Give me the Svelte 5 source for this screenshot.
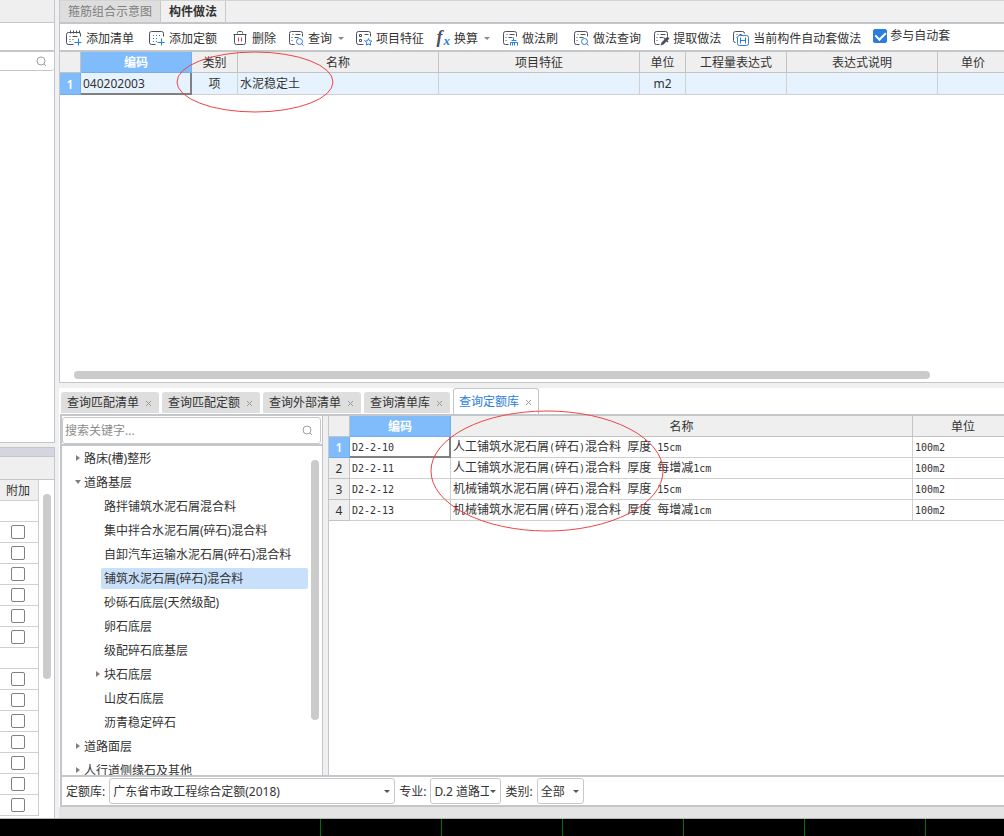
<script>
  let keyword = "";
  let autoApply = true;
  let library = "广东省市政工程综合定额(2018)";
  let major = "D.2 道路工程";
  let kind = "全部";

  const tools = [
    { icon: "addList", label: "添加清单", spaced: true },
    { icon: "addQuota", label: "添加定额", spaced: true },
    { icon: "trash", label: "删除" },
    { icon: "query", label: "查询", menu: true },
    { icon: "feature", label: "项目特征" },
    { icon: "fx", label: "换算", menu: true },
    { icon: "brush", label: "做法刷", spaced: true },
    { icon: "query", label: "做法查询" },
    { icon: "extract", label: "提取做法" },
    { icon: "auto", label: "当前构件自动套做法" },
  ];

  const queryTabs = ["查询匹配清单", "查询匹配定额", "查询外部清单", "查询清单库", "查询定额库"];
  let activeTab = "查询定额库";

  const tree = [
    { label: "路床(槽)整形", level: 0, arrow: "closed" },
    { label: "道路基层", level: 0, arrow: "open" },
    { label: "路拌铺筑水泥石屑混合料", level: 1 },
    { label: "集中拌合水泥石屑(碎石)混合料", level: 1 },
    { label: "自卸汽车运输水泥石屑(碎石)混合料", level: 1 },
    { label: "铺筑水泥石屑(碎石)混合料", level: 1 },
    { label: "砂砾石底层(天然级配)", level: 1 },
    { label: "卵石底层", level: 1 },
    { label: "级配碎石底基层", level: 1 },
    { label: "块石底层", level: 1, arrow: "closed" },
    { label: "山皮石底层", level: 1 },
    { label: "沥青稳定碎石", level: 1 },
    { label: "道路面层", level: 0, arrow: "closed" },
    { label: "人行道侧缘石及其他", level: 0, arrow: "closed" },
  ];
  let selectedNode = "铺筑水泥石屑(碎石)混合料";

  const quotas = [
    { code: "D2-2-10", name: "人工铺筑水泥石屑(碎石)混合料 厚度 15cm", unit: "100m2" },
    { code: "D2-2-11", name: "人工铺筑水泥石屑(碎石)混合料 厚度 每增减1cm", unit: "100m2" },
    { code: "D2-2-12", name: "机械铺筑水泥石屑(碎石)混合料 厚度 15cm", unit: "100m2" },
    { code: "D2-2-13", name: "机械铺筑水泥石屑(碎石)混合料 厚度 每增减1cm", unit: "100m2" },
  ];

  // rows of the attribute table, false = no checkbox in the row
  const extras = [false, true, true, true, true, true, true, false, true, true, true, true, true, true, true];

  // split into half-width and full-width runs
  const runs = (text) => text.match(/[\x20-\x7e]+|[^\x20-\x7e]+/g) || [];
  const isLatin = (run) => run.charCodeAt(0) < 127;
</script>

{#snippet frame()}
  <path d="M14 6V3a2 2 0 0 0-2-2H3a2 2 0 0 0-2 2v9a2 2 0 0 0 2 2h3" />
  <path d="M4 4h1M7 4h5M3 7h1M6 7h4M3 10h1" />
{/snippet}

{#snippet magnifier()}
  <svg class="magnifier" viewBox="0 0 11 11" width="11" height="11" aria-hidden="true">
    <circle cx="5" cy="5" r="4" />
    <path d="M8 8l2 2" />
  </svg>
{/snippet}

{#snippet cells(text)}{#each runs(text) as run}<span class:latin={isLatin(run)}>{run}</span>{/each}{/snippet}

{#snippet toolIcon(name)}
  <svg class="icon" class:narrow={name === "fx"} viewBox="-.5 -.5 16 16" width="16" height="16" aria-hidden="true">
    {#if name === "addList"}
      <path d="M2 2a2 2 0 0 0-2 2v8a2 2 0 0 0 2 2h5M13 2a1 1 0 0 1 1 1v3M2 2h11M4 0v3M7 0v3M10 0v3M13 0v3" />
      <path d="M3 6h1M6 6h5M3 9h1M6 9h1M3 11h1" />
      <path class="blue" d="M12 8v7M8 12h7" />
    {:else if name === "addQuota"}
      <path d="M14 6V3a2 2 0 0 0-2-2H2a2 2 0 0 0-2 2v9a2 2 0 0 0 2 2h4" />
      <path class="blue" stroke-dasharray="1 2" d="M3.500 5h8M3.500 8h5M3.500 11h4" />
      <path class="blue" d="M12 8v7M8 12h7" />
    {:else if name === "trash"}
      <path d="M1 4h13M5 3V2a1 1 0 0 1 1-1h3a1 1 0 0 1 1 1v1M2 4v8a2 2 0 0 0 2 2h7a2 2 0 0 0 2-2V4" />
      <path class="red" d="M6 7v4M9 7v4" />
    {:else if name === "query"}
      {@render frame()}
      <circle class="blue" cx="11" cy="11" r="3" />
      <path class="blue" d="M13 13l2 2" />
    {:else if name === "feature"}
      <path d="M14 6V3a2 2 0 0 0-2-2H2a2 2 0 0 0-2 2v9a2 2 0 0 0 2 2h5" />
      <path d="M3 4h2v2H3zM3 9h2v2H3zM8 4h4M8 10h0.500" />
      <path class="blue" d="M12 8l1 2.300 2.400.3-1.700 1.600.4 2.400-2.100-1.100-2.100 1.100.4-2.400-1.700-1.600 2.400-.3z" />
    {:else if name === "fx"}
      <text x="0" y="12">f</text>
      <text class="sub" x="7" y="14">x</text>
    {:else if name === "brush"}
      {@render frame()}
      <path class="blue" d="M11 7v3M9 10h5M8 12h7M8 12v3M10 12v3M12 12v3M15 12v3" />
    {:else if name === "extract"}
      {@render frame()}
      <path class="fill" d="M7 15l1-3 3-3-1-1 1-1 1 1 2-2 2 2-2 2 1 1-1 1-1-1-3 3z" />
    {:else if name === "auto"}
      <path d="M11 3a2 2 0 0 0-2-2H2a2 2 0 0 0-2 2v7a2 2 0 0 0 2 2M3 4h1M6 4h2M3 7h0.500" />
      <rect class="blue white" x="4" y="5" width="11" height="10" rx="2" />
      <path class="blue" d="M7 7v6M12 7v6M7 10h5" />
    {/if}
  </svg>
{/snippet}

<div class="app">
  <div class="workspace">
    <aside class="side">
      <div class="side-top">
        <div class="side-title"></div>
        <div class="side-tools"></div>
        <div class="side-search">{@render magnifier()}</div>
      </div>
      <div class="side-bottom">
        <div class="side-bar"></div>
        <div class="side-title"></div>
        <div class="side-grid">
          <table class="extra">
            <thead>
              <tr><th>附加</th></tr>
            </thead>
            <tbody>
              {#each extras as extra, i}
                <tr>
                  <td>
                    {#if extra}
                      <input type="checkbox" aria-label="附加 {i + 1}" />
                    {/if}
                  </td>
                </tr>
              {/each}
            </tbody>
          </table>
          <div class="vbar side-thumb"></div>
        </div>
      </div>
    </aside>

    <main class="main">
      <section class="method">
        <nav class="top-tabs">
          <button>箍筋组合示意图</button>
          <button class="active">构件做法</button>
        </nav>

        <div class="toolbar">
          {#each tools as tool}
            <button class="tool" class:spaced={tool.spaced}>
              {@render toolIcon(tool.icon)}
              <span>{tool.label}</span>
              {#if tool.menu}
                <i class="caret"></i>
              {/if}
            </button>
          {/each}
          <label class="auto">
            <input type="checkbox" bind:checked={autoApply} />
            参与自动套
          </label>
        </div>

        <div class="grid-wrap">
          <table class="grid items">
            <colgroup>
              <col style="width: 21px" />
              <col style="width: 111px" />
              <col style="width: 46px" />
              <col style="width: 201px" />
              <col style="width: 201px" />
              <col style="width: 46px" />
              <col style="width: 101px" />
              <col style="width: 151px" />
              <col />
            </colgroup>
            <thead>
              <tr>
                <th></th>
                <th class="picked">编码</th>
                <th>类别</th>
                <th>名称</th>
                <th>项目特征</th>
                <th>单位</th>
                <th>工程量表达式</th>
                <th>表达式说明</th>
                <th>单价</th>
              </tr>
            </thead>
            <tbody>
              <tr>
                <th class="picked">1</th>
                <td class="current">040202003</td>
                <td class="center">项</td>
                <td>水泥稳定土</td>
                <td></td>
                <td class="center">m2</td>
                <td></td>
                <td></td>
                <td></td>
              </tr>
            </tbody>
          </table>
        </div>
        <div class="hbar"></div>

        <svg class="mark mark-item" viewBox="0 0 158 62" aria-hidden="true">
          <ellipse cx="79" cy="31" rx="78" ry="30" />
        </svg>
      </section>

      <section class="dock">
        <nav class="query-tabs">
          {#each queryTabs as tab}
            <button class:active={tab === activeTab} on:click={() => (activeTab = tab)}>
              <span>{tab}</span>
              <svg viewBox="0 0 8 8" width="8" height="8" aria-hidden="true"><path d="M1 2l5 5M6 2l-5 5" /></svg>
            </button>
          {/each}
        </nav>

        <div class="dock-body">
          <div class="panes">
            <div class="catalog">
              <div class="search">
                <input type="text" placeholder="搜索关键字..." aria-label="搜索关键字" bind:value={keyword} />
                {@render magnifier()}
              </div>
              <div class="tree-wrap">
                <ul class="tree">
                  {#each tree as node}
                    <li class:child={node.level === 1}>
                      <i class="arrow {node.arrow || ''}"></i>
                      <button class:selected={node.label === selectedNode} on:click={() => (selectedNode = node.label)}>
                        {node.label}
                      </button>
                    </li>
                  {/each}
                </ul>
                <div class="vbar tree-thumb"></div>
              </div>
            </div>
            <div class="splitter"></div>
            <div class="grid-wrap">
              <table class="grid quotas">
                <colgroup>
                  <col style="width: 21px" />
                  <col style="width: 101px" />
                  <col />
                  <col style="width: 101px" />
                </colgroup>
                <thead>
                  <tr>
                    <th></th>
                    <th class="picked">编码</th>
                    <th>名称</th>
                    <th>单位</th>
                  </tr>
                </thead>
                <tbody>
                  {#each quotas as quota, i}
                    <tr>
                      <th class:picked={i === 0}>{i + 1}</th>
                      <td class:current={i === 0}>{@render cells(quota.code)}</td>
                      <td>{@render cells(quota.name)}</td>
                      <td>{@render cells(quota.unit)}</td>
                    </tr>
                  {/each}
                </tbody>
              </table>
            </div>
          </div>

          <div class="filters">
            <label for="library">定额库:</label>
            <div class="select library">
              <select id="library" bind:value={library}>
                <option>广东省市政工程综合定额(2018)</option>
              </select>
            </div>
            <label for="major">专业:</label>
            <div class="select major">
              <select id="major" bind:value={major}>
                <option>D.2 道路工程</option>
              </select>
            </div>
            <label for="kind">类别:</label>
            <div class="select kind">
              <select id="kind" bind:value={kind}>
                <option>全部</option>
              </select>
            </div>
          </div>
        </div>
        <div class="strip"></div>

        <svg class="mark mark-quota" viewBox="0 0 234 122" aria-hidden="true">
          <ellipse cx="117" cy="61" rx="116" ry="60" />
        </svg>
      </section>
    </main>
  </div>

  <div class="viewport">
    <div class="axes"></div>
  </div>
</div>

<style>
  :global(body) {
    margin: 0;
    background: #f0f0f0;
  }

  .app {
    min-height: 100vh;
    display: flex;
    flex-direction: column;
    overflow: hidden;
    font-family: "Noto Sans", "Noto Sans CJK SC", sans-serif;
    font-size: 12px;
    line-height: 16px;
    color: #333;
  }

  .app * {
    box-sizing: border-box;
  }

  button,
  input,
  select {
    font: inherit;
    color: inherit;
    margin: 0;
    padding: 0;
    border: none;
    background: none;
  }

  .workspace {
    flex: 1;
    display: flex;
    gap: 4px;
    border-bottom: 1px solid #b4b6b8;
  }

  /* left column */
  .side {
    width: 55px;
    flex-shrink: 0;
    display: flex;
    flex-direction: column;
    gap: 4px;
  }

  .side-top,
  .side-bottom {
    border-right: 1px solid #c3c7cc;
    background: #fff;
  }

  .side-top {
    flex: 1;
    border-bottom: 1px solid #c3c7cc;
  }

  .side-title {
    height: 23px;
    background: #efefef;
    border-bottom: 1px solid #c3c7cc;
  }

  .side-tools {
    height: 29px;
    border-bottom: 2px solid #c3c7cc;
  }

  .side-search {
    height: 19px;
    display: flex;
    align-items: center;
    justify-content: flex-end;
    padding-right: 7px;
    border-bottom: 1px solid #c3c7cc;
    border-radius: 0 3px 3px 0;
  }

  .magnifier {
    fill: none;
    stroke: #a0a0a0;
    flex-shrink: 0;
  }

  .side-bar {
    height: 10px;
    background: #d3d6dd;
    border-top: 1px solid #c3c7cc;
    border-bottom: 1px solid #c3c7cc;
  }

  .side-grid {
    display: flex;
    align-items: flex-start;
    gap: 4px;
    padding-bottom: 2px;
  }

  .extra {
    width: 39px;
    border-spacing: 0;
  }

  .extra th,
  .extra td {
    height: 21px;
    padding: 0;
    border-right: 1px solid #d0d0d0;
    border-bottom: 1px solid #d0d0d0;
    font-weight: 400;
    text-align: center;
  }

  .extra th {
    padding: 2px 2px 0 0;
    background: #efefef;
  }

  .extra input {
    appearance: none;
    display: block;
    width: 14px;
    height: 14px;
    margin-left: 11px;
    border: 1px solid #808080;
    border-radius: 2px;
    background: #fff;
  }

  .vbar {
    width: 8px;
    border-radius: 4px;
    background: #cbcbcb;
    flex-shrink: 0;
  }

  .side-thumb {
    height: 185px;
    margin-top: 14px;
  }

  /* right column */
  .main {
    flex: 1;
    min-width: 0;
    display: flex;
    flex-direction: column;
    gap: 5px;
  }

  .method {
    flex: 1;
    position: relative;
    display: flex;
    flex-direction: column;
    background: #fff;
    border-left: 1px solid #c3c7cc;
    border-bottom: 1px solid #c3c7cc;
  }

  .top-tabs {
    display: flex;
    height: 24px;
    background: #f0f0f0;
    border-top: 1px solid #d4d4d4;
    border-bottom: 2px solid #c3c7cc;
  }

  .top-tabs button {
    padding: 1px 8px 0;
    border-right: 1px solid #c8c8c8;
    background: #dedede;
    color: #808080;
  }

  .top-tabs .active {
    background: #f0f0f0;
    color: #333;
    font-weight: 600;
  }

  .toolbar {
    display: flex;
    align-items: center;
    gap: 12px;
    height: 28px;
    padding: 2px 0 0 6px;
    border-bottom: 2px solid #c3c7cc;
    white-space: nowrap;
  }

  .tool {
    display: flex;
    align-items: center;
    gap: 4px;
  }

  .tool.spaced {
    margin-right: 3px;
  }

  .tool span {
    padding-top: 2px;
  }

  .icon {
    fill: none;
    stroke: #4a4f63;
    flex-shrink: 0;
    overflow: visible;
  }

  .icon.narrow {
    margin-right: -2px;
  }

  .icon .blue {
    stroke: #2b7de0;
  }

  .icon .red {
    stroke: #d8303c;
  }

  .icon .white {
    fill: #fff;
  }

  .icon .fill {
    fill: #4a4f63;
    stroke: none;
  }

  .icon text {
    fill: #4a4f63;
    stroke: none;
    font: italic bold 18px "Liberation Serif", serif;
  }

  .icon .sub {
    fill: #2b7de0;
    font-size: 13px;
  }

  .caret {
    margin: 1px 0 0 2px;
    border: 3px solid transparent;
    border-top-color: #8a8a8a;
    border-bottom: none;
  }

  .auto {
    display: flex;
    align-items: center;
    gap: 3px;
    padding-bottom: 4px;
  }

  .auto input {
    appearance: none;
    display: grid;
    place-items: center;
    width: 14px;
    height: 14px;
    border: 1px solid #2b7de0;
    border-radius: 2px;
  }

  .auto input:checked {
    background: #2b7de0;
  }

  .auto input:checked::after {
    content: "";
    width: 5px;
    height: 8px;
    margin-bottom: 3px;
    border: solid #fff;
    border-width: 0 2px 2px 0;
    transform: rotate(45deg);
  }

  .grid-wrap {
    flex: 1;
    min-width: 0;
    overflow: hidden;
  }

  .grid {
    width: 100%;
    table-layout: fixed;
    border-spacing: 0;
  }

  .items {
    min-width: 949px;
  }

  .quotas {
    min-width: 685px;
  }

  .grid th,
  .grid td {
    height: 21px;
    padding: 0 2px;
    border-right: 1px solid #d0d0d0;
    border-bottom: 1px solid #d0d0d0;
    white-space: nowrap;
  }

  .grid th {
    padding-top: 2px;
    background: #efefef;
    border-color: #c3c3c3;
    font-weight: 400;
  }

  .grid .picked {
    background: #80bcfc;
    border-color: #70aef0;
    color: #fff;
    font-weight: 600;
  }

  .items td,
  .items tbody th {
    height: 22px;
  }

  .items td {
    background: #e6f3fe;
  }

  .grid .current {
    border-color: #808080;
    box-shadow: inset -1px -1px #808080;
  }

  .grid .center {
    text-align: center;
  }

  .quotas td {
    line-height: 14px;
  }

  .latin {
    font-family: "DejaVu Sans Mono", monospace;
    font-size: 10px;
    white-space: pre;
  }

  .hbar {
    height: 8px;
    margin: 0 74px 3px 14px;
    border-radius: 4px;
    background: #cbcbcb;
  }

  .mark {
    position: absolute;
    fill: none;
    stroke: #ee4444;
    pointer-events: none;
  }

  .mark-item {
    left: 116px;
    top: 51px;
    width: 158px;
  }

  .mark-quota {
    left: 371px;
    top: 22px;
    width: 234px;
  }

  /* query dock */
  .dock {
    position: relative;
    height: 430px;
    display: flex;
    flex-direction: column;
    background: #fff;
  }

  .query-tabs {
    display: flex;
    align-items: flex-end;
    gap: 3px;
    height: 26px;
    padding-left: 2px;
  }

  .query-tabs button {
    display: flex;
    align-items: center;
    gap: 6px;
    height: 21px;
    margin-bottom: 1px;
    padding: 0 6px;
    border-radius: 3px 3px 0 0;
    background: #dedede;
    white-space: nowrap;
  }

  .query-tabs .active {
    height: 26px;
    margin-bottom: 0;
    padding: 0 5px;
    border: 1px solid #c3c7cc;
    border-bottom: none;
    background: #fff;
    color: #2b7de0;
  }

  .query-tabs svg {
    fill: none;
    stroke: #999;
  }

  .dock-body {
    flex: 1;
    min-height: 0;
    display: flex;
    flex-direction: column;
    margin-left: 1px;
    border: 2px solid #c3c7cc;
    border-right: none;
  }

  .panes {
    flex: 1;
    min-height: 0;
    display: flex;
  }

  .catalog {
    width: 261px;
    display: flex;
    flex-direction: column;
    border-right: 1px solid #c3c7cc;
  }

  .search {
    display: flex;
    align-items: center;
    height: 27px;
    margin: 1px 1px 0 0;
    padding: 0 7px 0 2px;
    border: 1px solid #c8c8c8;
    border-radius: 3px;
  }

  .search input {
    flex: 1;
    min-width: 0;
    outline: none;
  }

  .search input::placeholder {
    color: #8c8c8c;
  }

  .tree-wrap {
    flex: 1;
    min-height: 0;
    display: flex;
    gap: 3px;
    padding-right: 3px;
    border-top: 2px solid #c3c7cc;
  }

  .tree {
    flex: 1;
    min-width: 0;
    margin: 0;
    padding: 0;
    overflow: hidden;
    list-style: none;
  }

  .tree li {
    display: flex;
    align-items: center;
    height: 24px;
    padding-left: 13px;
  }

  .tree .child {
    padding-left: 33px;
  }

  .tree button {
    flex: 1;
    height: 21px;
    padding: 2px 0 0 3px;
    border-radius: 2px;
    text-align: left;
    white-space: nowrap;
  }

  .tree .selected {
    background: #c9e0fa;
  }

  .arrow {
    width: 6px;
    display: flex;
    justify-content: center;
  }

  .arrow.closed::before {
    content: "";
    border: 3px solid transparent;
    border-left: 4px solid #808080;
    border-right: none;
  }

  .arrow.open::before {
    content: "";
    border: 3px solid transparent;
    border-top: 4px solid #808080;
    border-bottom: none;
  }

  .tree-thumb {
    height: 260px;
    margin-top: 14px;
  }

  .splitter {
    width: 6px;
    background: #f0f0f0;
    border-right: 1px solid #c3c7cc;
  }

  .filters {
    display: flex;
    align-items: center;
    gap: 4px;
    height: 30px;
    padding-left: 4px;
    border-top: 2px solid #c3c7cc;
    white-space: nowrap;
  }

  .filters label {
    padding-top: 1px;
  }

  .select {
    position: relative;
  }

  .select::after {
    content: "";
    position: absolute;
    right: 5px;
    top: 12px;
    border: 3px solid transparent;
    border-top-color: #555;
    border-bottom: none;
    pointer-events: none;
  }

  select {
    appearance: none;
    display: block;
    width: 100%;
    height: 26px;
    padding: 1px 11px 0 3px;
    border: 1px solid #c8c8c8;
    border-radius: 3px;
    background: #fff;
    outline: none;
  }

  .library {
    width: 286px;
  }

  .major {
    width: 71px;
  }

  .kind {
    width: 47px;
  }

  .strip {
    height: 11px;
    background: #e4e4e4;
  }

  /* model view under the docks */
  .viewport {
    height: 17px;
    background: #000;
  }

  .axes {
    height: 100%;
    margin-left: 320px;
    background: repeating-linear-gradient(to right, #007000 0 1px, transparent 1px 121px);
  }
</style>
